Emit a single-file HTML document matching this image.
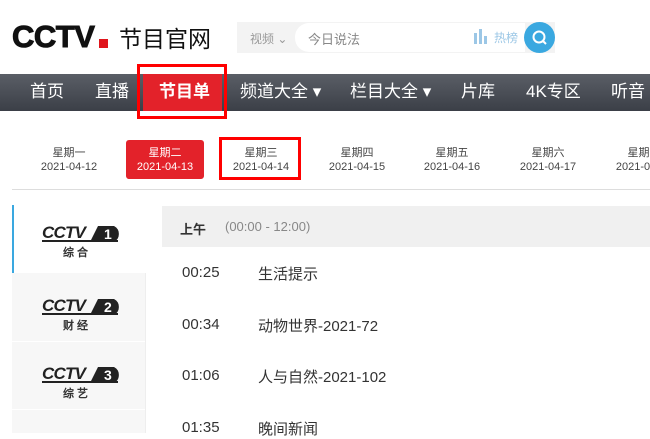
<!DOCTYPE html>
<html><head><meta charset="utf-8"><style>
*{margin:0;padding:0;box-sizing:border-box}
body{width:650px;height:433px;overflow:hidden;background:#fff;font-family:"Liberation Sans","Noto Sans CJK SC",sans-serif;position:relative}
.a{position:absolute;white-space:nowrap}
.nav{position:absolute;left:0;top:74px;width:650px;height:37px;background:linear-gradient(#5a5e66,#3b3f47)}
.nav span{position:absolute;top:8px;color:#fff;font-size:17px;line-height:20px}
.d{position:absolute;top:146px;width:90px;text-align:center;font-size:11px;line-height:14px;color:#444}
.row{position:absolute;font-size:15px;color:#333}
</style></head><body>
<div class="a" style="left:12px;top:19px;font-size:31px;font-weight:900;color:#111;letter-spacing:-0.5px;font-family:'Liberation Sans',sans-serif;-webkit-text-stroke:1px #111">CCTV</div>
<div class="a" style="left:99px;top:39px;width:9px;height:9px;background:#e0141b"></div>
<div class="a" style="left:119px;top:20px;font-size:23px;color:#111">节目官网</div>
<div class="a" style="left:237px;top:22px;width:318px;height:31px;background:#f3f3f3"></div>
<div class="a" style="left:250px;top:30px;font-size:12px;color:#999">视频 ⌄</div>
<div class="a" style="left:295px;top:23px;width:230px;height:29px;background:#fff;border-radius:14px 0 0 14px"></div>
<div class="a" style="left:308px;top:29px;font-size:13px;color:#888">今日说法</div>
<div class="a" style="left:474px;top:33px;width:3px;height:11px;background:#9cc7e6"></div>
<div class="a" style="left:479px;top:29px;width:3px;height:15px;background:#9cc7e6"></div>
<div class="a" style="left:484px;top:36px;width:3px;height:8px;background:#9cc7e6"></div>
<div class="a" style="top:29px;font-size:12px;color:#9cc7e6;left:494px">热榜</div>
<div class="a" style="left:524px;top:22px;width:31px;height:31px;border-radius:50%;background:#3aa8e0"></div>
<svg class="a" style="left:530px;top:28px" width="20" height="20"><circle cx="9" cy="9" r="5.5" stroke="#fff" stroke-width="2" fill="none"/><line x1="13" y1="13" x2="16" y2="16" stroke="#fff" stroke-width="2"/></svg>
<div class="nav">
<span style="left:30px">首页</span><span style="left:95px">直播</span>
<div style="position:absolute;left:143px;top:0;width:79px;height:37px;background:#e3222a"></div>
<span style="left:159px;font-weight:bold">节目单</span>
<span style="left:240px">频道大全 ▾</span><span style="left:350px">栏目大全 ▾</span>
<span style="left:461px">片库</span><span style="left:526px">4K专区</span><span style="left:611px">听音</span>
</div>
<div class="a" style="left:137px;top:64px;width:90px;height:55px;border:3px solid #f00"></div>
<div class="a" style="left:126px;top:140px;width:78px;height:39px;background:#e3222a;border-radius:3px"></div>
<div class="d" style="left:24px">星期一<br>2021-04-12</div>
<div class="d" style="left:120px;color:#fff">星期二<br>2021-04-13</div>
<div class="d" style="left:216px">星期三<br>2021-04-14</div>
<div class="d" style="left:312px">星期四<br>2021-04-15</div>
<div class="d" style="left:407px">星期五<br>2021-04-16</div>
<div class="d" style="left:503px">星期六<br>2021-04-17</div>
<div class="d" style="left:599px">星期日<br>2021-04-18</div>
<div class="a" style="left:219px;top:137px;width:82px;height:43px;border:3px solid #f00"></div>
<div class="a" style="left:12px;top:189px;width:638px;height:1px;background:#ddd"></div>
<div class="a" style="left:12px;top:205px;width:134px;height:228px;background:#f7f7f7;border-right:1px solid #eee"></div>
<div class="a" style="left:12px;top:341px;width:133px;height:1px;background:#fff"></div>
<div class="a" style="left:12px;top:409px;width:133px;height:1px;background:#fff"></div>
<div class="a" style="left:12px;top:205px;width:134px;height:68px;background:#fff;border-left:2px solid #3aa8e0"></div>
<svg class="a" style="left:38px;top:218px" width="86" height="215">
<defs><g id="lg"><text x="4" y="20" font-size="17" fill="#222" font-style="italic" font-weight="bold" font-family="Liberation Sans,sans-serif" textLength="44">CCTV</text><rect x="4" y="22" width="76" height="2" fill="#222"/><path d="M52 24 L60 8 L76 8 A9 9 0 0 1 76 24 Z" fill="#222"/></g></defs>
<g font-family="Liberation Sans,sans-serif" font-weight="bold">
<use href="#lg"/><text x="66" y="21" font-size="14" fill="#fff">1</text><text x="25" y="38" font-size="11" fill="#333">综  合</text>
<g transform="translate(0,73)"><use href="#lg"/><text x="66" y="21" font-size="14" fill="#fff">2</text><text x="25" y="38" font-size="11" fill="#333">财  经</text></g>
<g transform="translate(0,141)"><use href="#lg"/><text x="66" y="21" font-size="14" fill="#fff">3</text><text x="25" y="38" font-size="11" fill="#333">综  艺</text></g>
<g transform="translate(0,208)"><use href="#lg"/></g>
</g></svg>
<div class="a" style="left:162px;top:206px;width:488px;height:41px;background:#f0f0f0"></div>
<div class="a" style="left:180px;top:219px;font-size:13px;font-weight:bold;color:#333">上午</div>
<div class="a" style="left:225px;top:219px;font-size:13px;color:#888">(00:00 - 12:00)</div>
<div class="row" style="left:182px;top:264px">00:25</div><div class="row" style="left:258px;top:263px">生活提示</div>
<div class="row" style="left:182px;top:316px">00:34</div><div class="row" style="left:258px;top:315px">动物世界-2021-72</div>
<div class="row" style="left:182px;top:367px">01:06</div><div class="row" style="left:258px;top:366px">人与自然-2021-102</div>
<div class="row" style="left:182px;top:419px">01:35</div><div class="row" style="left:258px;top:418px">晚间新闻</div>
</body></html>
